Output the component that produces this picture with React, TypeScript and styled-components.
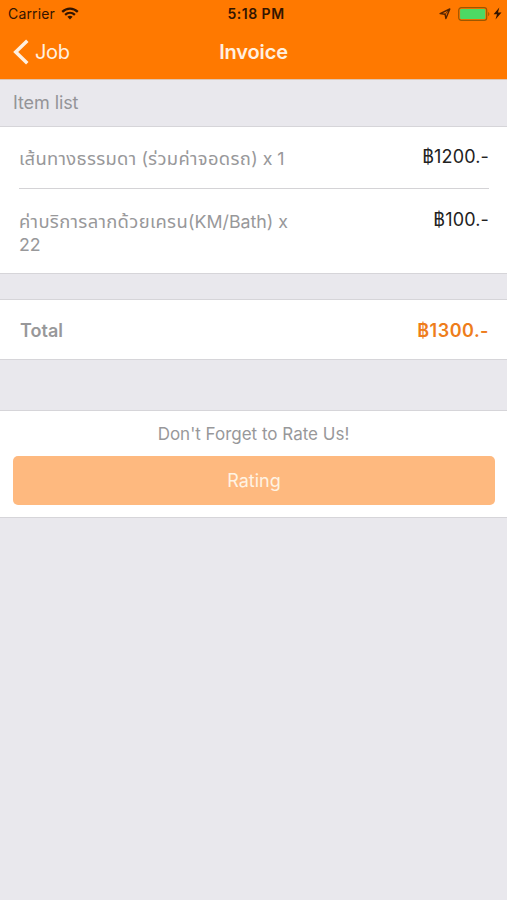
import React from "react";
import styled, { createGlobalStyle } from "styled-components";

const GlobalStyle = createGlobalStyle`
  * { box-sizing: border-box; }
  body {
    margin: 0;
    background: #e9e8ed;
    font-family: Inter, "Noto Sans Thai", "Noto Sans", "Liberation Sans", sans-serif;
    color: #98989a;
  }
`;

const Screen = styled.div`
  min-height: 900px;
  background: #e9e8ed;
`;

const Header = styled.header`
  height: 80px;
  background: #ff7900;
  border-bottom: 1px solid #dfc5b0;
`;

const StatusBar = styled.div`
  height: 27px;
  display: grid;
  grid-template-columns: 1fr auto 1fr;
  align-items: center;
  padding: 0 5px 0 8px;
  font-size: 14px;
  line-height: 27px;
  color: #331500;
`;

const Carrier = styled.div`
  display: flex;
  align-items: center;
  gap: 6px;
  letter-spacing: 0.15px;
`;

const Time = styled.div`
  font-weight: 600;
  font-size: 14px;
  letter-spacing: 0.5px;
  padding-left: 2px;
`;

const StatusIcons = styled.div`
  display: flex;
  align-items: center;
  justify-content: flex-end;
`;

const NavBar = styled.nav`
  height: 52px;
  display: grid;
  grid-template-columns: 1fr auto 1fr;
  align-items: center;
  padding: 0 13px;
  color: #fff0e0;
`;

const Back = styled.a`
  display: flex;
  align-items: center;
  gap: 6px;
  font-size: 20px;
  line-height: 24px;
  padding-bottom: 2px;
  letter-spacing: -0.3px;
`;

const Title = styled.h1`
  margin: 0;
  padding-bottom: 2px;
  font-size: 20px;
  font-weight: 600;
  letter-spacing: -0.15px;
`;

const SectionHeader = styled.div`
  height: 46px;
  padding-left: 13px;
  font-size: 18px;
  line-height: 45px;
  letter-spacing: -0.1px;
  color: #949498;
`;

const Panel = styled.section<{ $gap?: number }>`
  margin-top: ${(p) => p.$gap ?? 0}px;
  background: #fff;
  border-top: 1px solid #d6d5d9;
  border-bottom: 1px solid #d6d5d9;
`;

const Item = styled.div<{ $height: number; $divided?: boolean }>`
  height: ${(p) => p.$height}px;
  margin: 0 18px 0 19px;
  display: flex;
  justify-content: space-between;
  border-bottom: ${(p) => (p.$divided ? "1px solid #d4d3d6" : "0")};
`;

const ItemName = styled.div<{ $top: number }>`
  width: 290px;
  padding-top: ${(p) => p.$top}px;
  font-size: 17.8px;
  line-height: 23px;
`;

const NameLine = styled.div`
  height: 23px;
  white-space: nowrap;
`;

const Thai = styled.span`
  font-size: 18.4px;
  line-height: 1;
  letter-spacing: 0.33px;
`;

const Price = styled.div<{ $top: number }>`
  padding-top: ${(p) => p.$top}px;
  font-size: 18px;
  line-height: 24px;
  letter-spacing: 0.15px;
  color: #222;
`;

const TotalRow = styled.div`
  height: 59px;
  padding: 1px 18px 0 20px;
  display: flex;
  align-items: center;
  justify-content: space-between;
  font-size: 18px;
  font-weight: 600;
`;

const TotalPrice = styled.span`
  color: #ee7d1b;
  letter-spacing: 0.5px;
`;

const RatePrompt = styled.div`
  height: 45px;
  text-align: center;
  font-size: 17px;
  line-height: 46px;
`;

const RateButton = styled.button`
  display: block;
  width: 482px;
  height: 49px;
  margin: 0 auto 12px 13px;
  padding: 0;
  border: 0;
  border-radius: 5px;
  background: #feb97f;
  color: #fff3e3;
  font: 400 18px/49px Inter, sans-serif;
`;

const WifiIcon = () => (
  <svg width="18" height="13" viewBox="0 0 18 13" fill="none" stroke="#331500" strokeWidth="2.3">
    <path d="M1.2 4.8C5.8.5 12.2.5 16.8 4.8" />
    <path d="M4.1 7.8C7 5.2 11 5.2 13.9 7.8" />
    <path d="M6.4 9.8Q9 7.9 11.6 9.8L9 12.4Z" fill="#331500" stroke="none" />
  </svg>
);

const LocationIcon = () => (
  <svg width="12" height="12" viewBox="0 0 12 12" fill="none" stroke="#552300" strokeWidth="1.4" strokeLinejoin="round">
    <path d="M10.8 1L6.9 10.5L6.1 6.3L1.1 5.6Z" />
    <path d="M10.8 1L6.1 6.3" strokeWidth=".8" />
  </svg>
);

const BatteryIcon = () => (
  <svg width="33" height="14" viewBox="0 0 33 14">
    <rect x=".7" y=".7" width="28" height="12.6" rx="2.6" fill="#ff7900" stroke="#9c5700" strokeWidth="1.2" />
    <rect x="2.1" y="2.1" width="25.2" height="9.8" rx="1" fill="#4cd964" />
    <path d="M30.2 4.7Q32.6 7 30.2 9.3Z" fill="#9c5700" />
  </svg>
);

const BoltIcon = () => (
  <svg width="9" height="13" viewBox="0 0 9 13" fill="#331500">
    <path d="M6.3.4L.6 7.2H4L2.5 12.6L8.5 5.5H5Z" />
  </svg>
);

const BackIcon = () => (
  <svg width="16" height="26" viewBox="0 0 16 26" fill="none" stroke="#fff0e0" strokeWidth="3.5">
    <path d="M14.3 1.7L2.7 13L14.3 24.3" />
  </svg>
);

const BatteryGroup = styled.span`
  display: flex;
  align-items: center;
  gap: 2px;
  margin-left: 7px;
`;

export default function App() {
  return (
    <Screen>
      <GlobalStyle />
      <Header>
        <StatusBar>
          <Carrier>Carrier <WifiIcon /></Carrier>
          <Time>5:18 PM</Time>
          <StatusIcons>
            <LocationIcon />
            <BatteryGroup><BatteryIcon /><BoltIcon /></BatteryGroup>
          </StatusIcons>
        </StatusBar>
        <NavBar>
          <Back><BackIcon />Job</Back>
          <Title>Invoice</Title>
        </NavBar>
      </Header>
      <SectionHeader>Item list</SectionHeader>
      <Panel>
        <Item $height={62} $divided>
          <ItemName $top={20}>
            <NameLine><Thai>เส้นทางธรรมดา</Thai> (<Thai>ร่วมค่าจอดรถ</Thai>) x 1</NameLine>
          </ItemName>
          <Price $top={18}>฿1200.-</Price>
        </Item>
        <Item $height={84}>
          <ItemName $top={21}>
            <NameLine><Thai>ค่าบริการลากด้วยเครน</Thai>(KM/Bath) x</NameLine>
            <NameLine>22</NameLine>
          </ItemName>
          <Price $top={19}>฿100.-</Price>
        </Item>
      </Panel>
      <Panel $gap={25}>
        <TotalRow>
          <span>Total</span>
          <TotalPrice>฿1300.-</TotalPrice>
        </TotalRow>
      </Panel>
      <Panel $gap={50}>
        <RatePrompt>Don't Forget to Rate Us!</RatePrompt>
        <RateButton>Rating</RateButton>
      </Panel>
    </Screen>
  );
}
